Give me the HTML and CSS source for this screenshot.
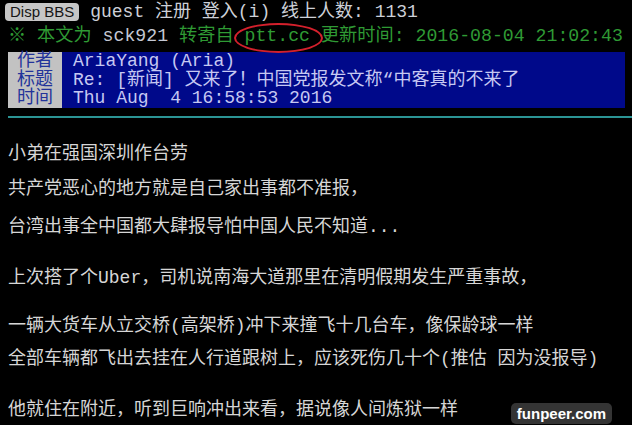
FILE: index.html
```html
<!DOCTYPE html>
<html lang="zh-CN">
<head>
    <meta charset="UTF-8">
    <meta name="viewport" content="width=device-width, initial-scale=1.0">
    <title>Disp BBS</title>
    <link rel="stylesheet" href="styles.css">
</head>
<body>
    <div class="screen">
        <div class="topbar">
            <span class="badge">Disp BBS</span>
            <span class="userline">guest 注册 登入(i) 线上人数: 1131</span>
        </div>
        <div class="srcline">※ 本文为 <span class="author-id">sck921</span> 转寄自 <span class="site">ptt.cc</span> 更新时间: 2016-08-04 21:02:43</div>

        <!-- 文章头 -->
        <div class="article-head">
            <div class="labels">
                <div>作者</div>
                <div>标题</div>
                <div>时间</div>
            </div>
            <div class="meta">
                <div class="meta-row">AriaYang (Aria)</div>
                <div class="meta-row">Re: [新闻] 又来了！中国党报发文称“中客真的不来了</div>
                <div class="meta-row">Thu Aug  4 16:58:53 2016</div>
            </div>
        </div>
        <div class="rule"></div>

        <!-- 正文 -->
        <div class="content">
            <p class="para">小弟在强国深圳作台劳</p>
            <p class="para gap-xs">共产党恶心的地方就是自己家出事都不准报，</p>
            <p class="para gap-s">台湾出事全中国都大肆报导怕中国人民不知道...</p>
            <p class="para gap-l">上次搭了个Uber，司机说南海大道那里在清明假期发生严重事故，</p>
            <p class="para gap-m">一辆大货车从立交桥(高架桥)冲下来撞飞十几台车，像保龄球一样</p>
            <p class="para">全部车辆都飞出去挂在人行道跟树上，应该死伤几十个(推估 因为没报导)</p>
            <p class="para gap-l">他就住在附近，听到巨响冲出来看，据说像人间炼狱一样</p>
        </div>

        <div class="watermark">funpeer.com</div>
    </div>
</body>
</html>
```

FILE: styles.css
```css
body {
    margin: 0;
    padding: 0;
    background-color: #000;
    font-family: "Liberation Mono", "Noto Sans CJK SC", monospace;
    font-size: 18px;
}
.screen {
    position: relative;
    height: 425px;
    overflow: hidden;
}
.topbar {
    display: flex;
    align-items: center;
    height: 24px;
    padding-left: 5px;
}
.badge {
    font-family: "Liberation Sans", Arial, sans-serif;
    font-size: 15px;
    line-height: 18px;
    height: 18px;
    padding: 0 5px;
    background: #c6c6c6;
    color: #151515;
    border-radius: 4px;
}
.userline {
    margin-left: 11px;
    color: #cdd0d8;
    white-space: pre;
    line-height: 24px;
}
.srcline {
    padding-left: 8px;
    height: 24px;
    line-height: 24px;
    font-size: 18.2px;
    color: #2f9a34;
    white-space: pre;
}
.author-id {
    color: #c4c8d4;
}
.site {
    position: relative;
}
.site::after {
    content: "";
    position: absolute;
    left: -11px;
    right: -13px;
    top: -3px;
    bottom: -7px;
    border: 2px solid #d4202c;
    border-radius: 50%;
}
.article-head {
    display: flex;
    margin: 4px 7px 0 8px;
    line-height: 18.7px;
}
.labels {
    width: 54px;
    background: #c2c2c2;
    color: #23339a;
    text-align: center;
}
.meta {
    flex: 1;
    background: #00098a;
    color: #c6c8f2;
    padding-left: 11px;
}
.meta-row {
    white-space: pre;
}
.rule {
    height: 2px;
    margin: 8px 0 0 8px;
    background: #2b9494;
}
.content {
    padding-left: 8px;
    padding-top: 20px;
    color: #d6d6d6;
}
.para {
    margin: 0;
    line-height: 33px;
    white-space: pre;
}
.gap-xs {
    margin-top: 2px;
}
.gap-s {
    margin-top: 5px;
}
.gap-m {
    margin-top: 15px;
}
.gap-l {
    margin-top: 18px;
}
.watermark {
    position: absolute;
    right: 20px;
    bottom: 1px;
    padding: 0 6px;
    height: 21px;
    line-height: 21px;
    background: rgba(58, 58, 58, 0.9);
    border-radius: 5px;
    color: #fff;
    font-family: "Liberation Sans", Arial, sans-serif;
    font-weight: bold;
    font-size: 15px;
}
```
